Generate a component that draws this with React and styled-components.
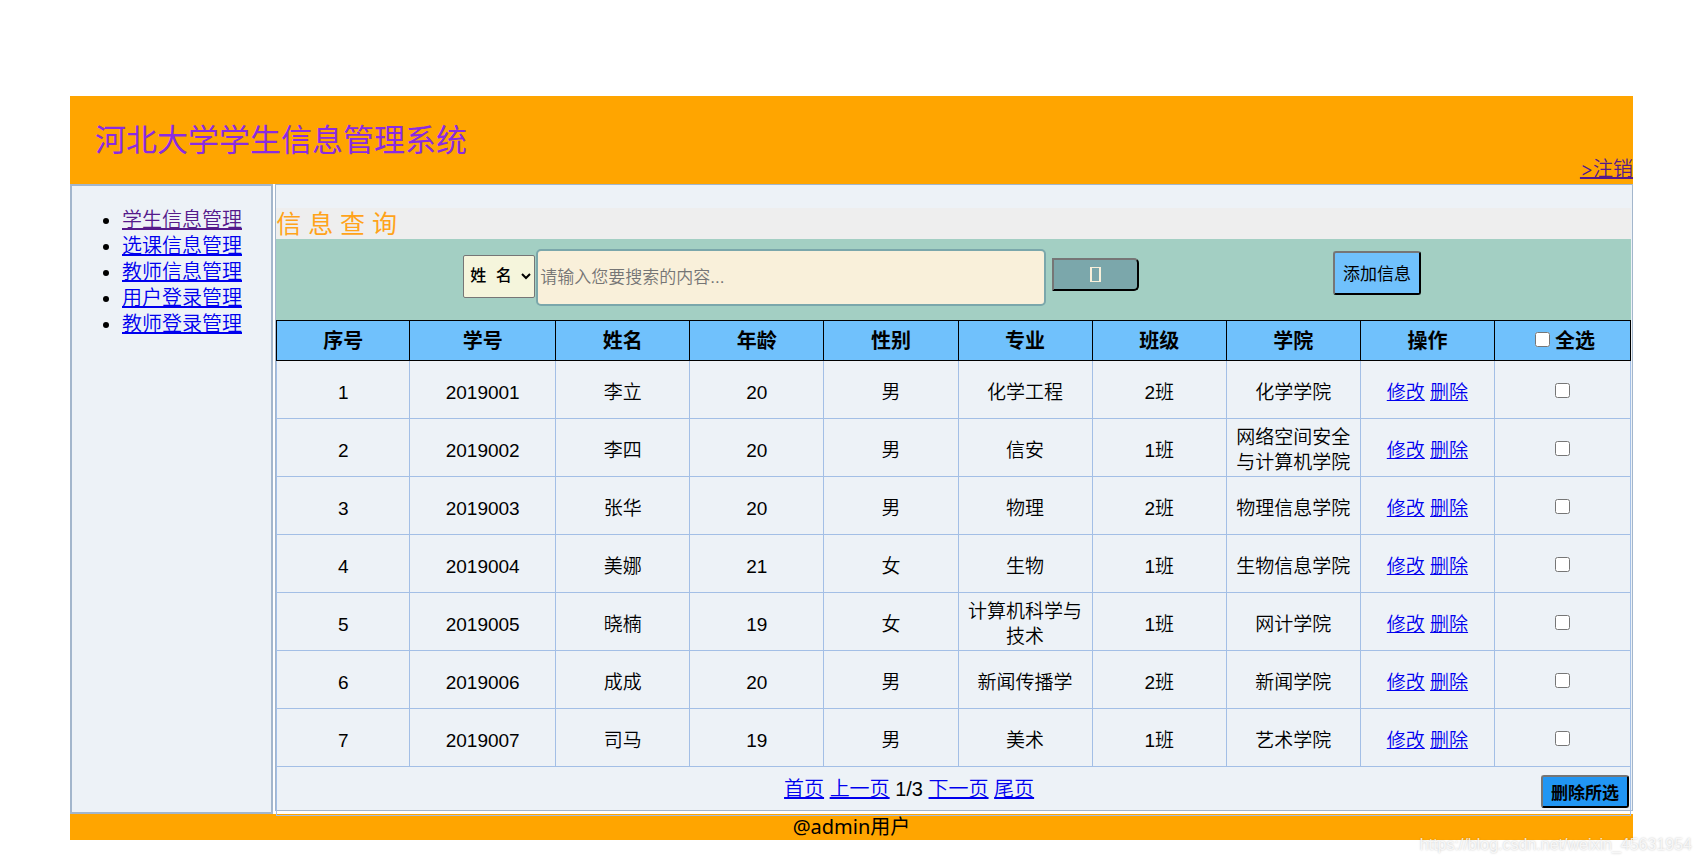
import React,{useState} from 'react';
import styled,{createGlobalStyle} from 'styled-components';

const GlobalStyle=createGlobalStyle`
  body{
    margin:0;
    background:white;
    color:black;
    font-family:"Liberation Sans","Noto Sans CJK SC",sans-serif;
    font-size:20px;
    font-weight:350;
    line-height:26px;
  }
  *{
    box-sizing:border-box;
  }
`;

const Page=styled.div`
  padding:96px 68px 23px 70px;
`;

const Header=styled.header`
  display:flex;
  justify-content:space-between;
  height:88px;
  padding-left:25px;
  background:orange;
  h1{
    margin:25px 0 0;
    color:blueviolet;
    font-size:31px;
    font-weight:400;
    line-height:40px;
  }
`;

const Link=styled.a`
  color:${props=>props.$visited?'#551a8b':'#0000ee'};
  text-decoration:underline;
`;

const Logout=styled(Link)`
  align-self:flex-end;
  font-family:Inter,"Noto Sans CJK SC",sans-serif;
  margin-bottom:2px;
`;

const Content=styled.div`
  display:flex;
  align-items:stretch;
  gap:2px;
`;

const Sidebar=styled.nav`
  flex:0 0 13%;
  border:2px solid #a3b6cc;
  background:#edf2f7;
  ul{
    margin:21px 0;
    padding-left:50px;
  }
`;

/* 表格底边压在页脚上面 */
const Main=styled.main`
  flex:1;
  position:relative;
  z-index:1;
  margin-bottom:3px;
  padding:23px 1px 0 0;
  border:1px solid #a3b6cc;
  background:#edf2f7;
`;

const Title=styled.h2`
  margin:0;
  padding-top:1px;
  background:#eeeeee;
  color:#ffa31a;
  font-size:25px;
  font-weight:400;
  line-height:30px;
`;

const SearchBar=styled.form`
  display:flex;
  align-items:flex-start;
  height:81px;
  padding:10px 210px 0 187px;
  background:#a3cfc3;
`;

const Select=styled.select`
  width:72px;
  height:43px;
  margin:6px 1px 0 0;
  padding:0 2px;
  border:1px solid #767676;
  border-radius:2px;
  background:beige;
  color:black;
  font-family:"Liberation Mono","Noto Sans CJK SC",monospace;
  font-size:16px;
  font-weight:500;
`;

const SearchInput=styled.input`
  flex:1;
  min-width:0;
  height:57px;
  padding:0 2px;
  border:2px solid #7ba7ab;
  border-radius:5px;
  background:#f9f0da;
  font-family:"Liberation Sans","Noto Sans CJK SC",sans-serif;
  font-size:17px;
  font-weight:350;
  &::placeholder{
    color:#757575;
  }
`;

const Button=styled.button`
  width:88px;
  height:${props=>props.$tall?'44px':'33px'};
  padding:0;
  border:2px outset black;
  border-color:#767676 #212121 #212121 #767676;
  border-radius:3px;
  background:#70c1fc;
  color:black;
  font-family:"Liberation Sans","Noto Sans CJK SC",sans-serif;
  font-size:17px;
  font-weight:700;
`;

const SearchButton=styled(Button)`
  display:flex;
  align-items:center;
  justify-content:center;
  width:87px;
  margin:9px 0 0 6px;
  border-radius:0 5px 5px 0;
  background:#7ba7ab;
  span{
    width:11px;
    height:15px;
    border:solid #f9f0da;
    border-width:1px 2px;
  }
`;

const AddButton=styled(Button)`
  margin:2px 0 0 194px;
  padding-bottom:2px;
  font-weight:400;
`;

const DeleteButton=styled(Button)`
  background:#2196f3;
`;

const Table=styled.table`
  width:100%;
  table-layout:fixed;
  border-collapse:collapse;
  text-align:center;
  margin-bottom:-6px;
  th{
    height:40px;
    padding:1px 0 0;
    border:1px solid black;
    background:#70c1fc;
    font-size:20px;
    font-weight:700;
  }
  td{
    height:58px;
    padding:5px 8px 0;
    border:1px solid #a3bfe6;
    font-size:19px;
    line-height:25px;
  }
  .index{
    width:133px;
  }
  .no{
    width:146px;
  }
  .check{
    width:136px;
  }
  td.pager{
    height:49px;
    padding:0 1px 0 0;
    font-size:20px;
  }
`;

const Checkbox=styled.input`
  width:15px;
  height:15px;
  margin:0 5px;
  vertical-align:1px;
`;

const Pager=styled.div`
  display:grid;
  grid-template-columns:1fr 88px;
  align-items:center;
  nav{
    padding-bottom:4px;
  }
`;

const Footer=styled.footer`
  background:orange;
  font-family:"Noto Sans","Noto Sans CJK SC",sans-serif;
  font-weight:400;
  line-height:26px;
  text-align:center;
`;

const Watermark=styled.div`
  position:absolute;
  right:9px;
  bottom:8px;
  z-index:2;
  color:rgba(255,255,255,0.8);
  font-size:16px;
  line-height:20px;
  text-shadow:0 0 2px rgba(0,0,0,0.25);
`;

const menus=['学生信息管理','选课信息管理','教师信息管理','用户登录管理','教师登录管理'];
const heads=['序号','学号','姓名','年龄','性别','专业','班级','学院','操作'];
const students=[
  ['2019001','李立','20','男','化学工程','2班','化学学院'],
  ['2019002','李四','20','男','信安','1班','网络空间安全与计算机学院'],
  ['2019003','张华','20','男','物理','2班','物理信息学院'],
  ['2019004','美娜','21','女','生物','1班','生物信息学院'],
  ['2019005','晓楠','19','女','计算机科学与技术','1班','网计学院'],
  ['2019006','成成','20','男','新闻传播学','2班','新闻学院'],
  ['2019007','司马','19','男','美术','1班','艺术学院'],
];
const colClass=['index','no'];

export default function App() {
  const [checked,setChecked]=useState([]);
  const all=checked.length===students.length;

  //全选
  const handleAll=()=>{
    setChecked(all?[]:students.map(s=>s[0]));
  };

  //单选
  const handleCheck=(id)=>{
    setChecked(checked.includes(id)?checked.filter(c=>c!==id):[...checked,id]);
  };

  return (
    <>
      <GlobalStyle/>
      <Page>
        <Header>
          <h1>河北大学学生信息管理系统</h1>
          <Logout $visited href="#logout">&gt;注销</Logout>
        </Header>
        <Content>
          <Sidebar>
            <ul>
              {menus.map((menu,idx)=>
              <li key={menu}><Link $visited={idx===0} href={'#menu'+idx}>{menu}</Link></li>)}
            </ul>
          </Sidebar>
          <Main>
            <Title>信 息 查 询</Title>
            <SearchBar onSubmit={e=>e.preventDefault()}>
              <Select aria-label="查询条件">
                <option>姓 名</option>
                <option>学 号</option>
              </Select>
              <SearchInput type="text" aria-label="搜索内容" placeholder="请输入您要搜索的内容..."/>
              <SearchButton type="submit" aria-label="搜索"><span/></SearchButton>
              <AddButton $tall type="button">添加信息</AddButton>
            </SearchBar>
            <Table>
              <thead>
                <tr>
                  {heads.map((head,idx)=><th key={head} className={colClass[idx]}>{head}</th>)}
                  <th className="check"><label><Checkbox type="checkbox" checked={all} onChange={handleAll}/>全选</label></th>
                </tr>
              </thead>
              <tbody>
                {students.map((student,idx)=>
                <tr key={student[0]}>
                  <td>{idx+1}</td>
                  {student.map((text,i)=><td key={i}>{text}</td>)}
                  <td><Link href="#edit">修改</Link> <Link href="#delete">删除</Link></td>
                  <td><Checkbox type="checkbox" aria-label={'选择'+student[1]} checked={checked.includes(student[0])} onChange={()=>handleCheck(student[0])}/></td>
                </tr>)}
                <tr>
                  <td className="pager" colSpan={10}>
                    <Pager>
                      <nav>
                        <Link href="#first">首页</Link> <Link href="#prev">上一页</Link> 1/3 <Link href="#next">下一页</Link> <Link href="#last">尾页</Link>
                      </nav>
                      <DeleteButton type="button">删除所选</DeleteButton>
                    </Pager>
                  </td>
                </tr>
              </tbody>
            </Table>
          </Main>
        </Content>
        <Footer>@admin用户</Footer>
      </Page>
      <Watermark>https://blog.csdn.net/weixin_45631954</Watermark>
    </>
  )
}
